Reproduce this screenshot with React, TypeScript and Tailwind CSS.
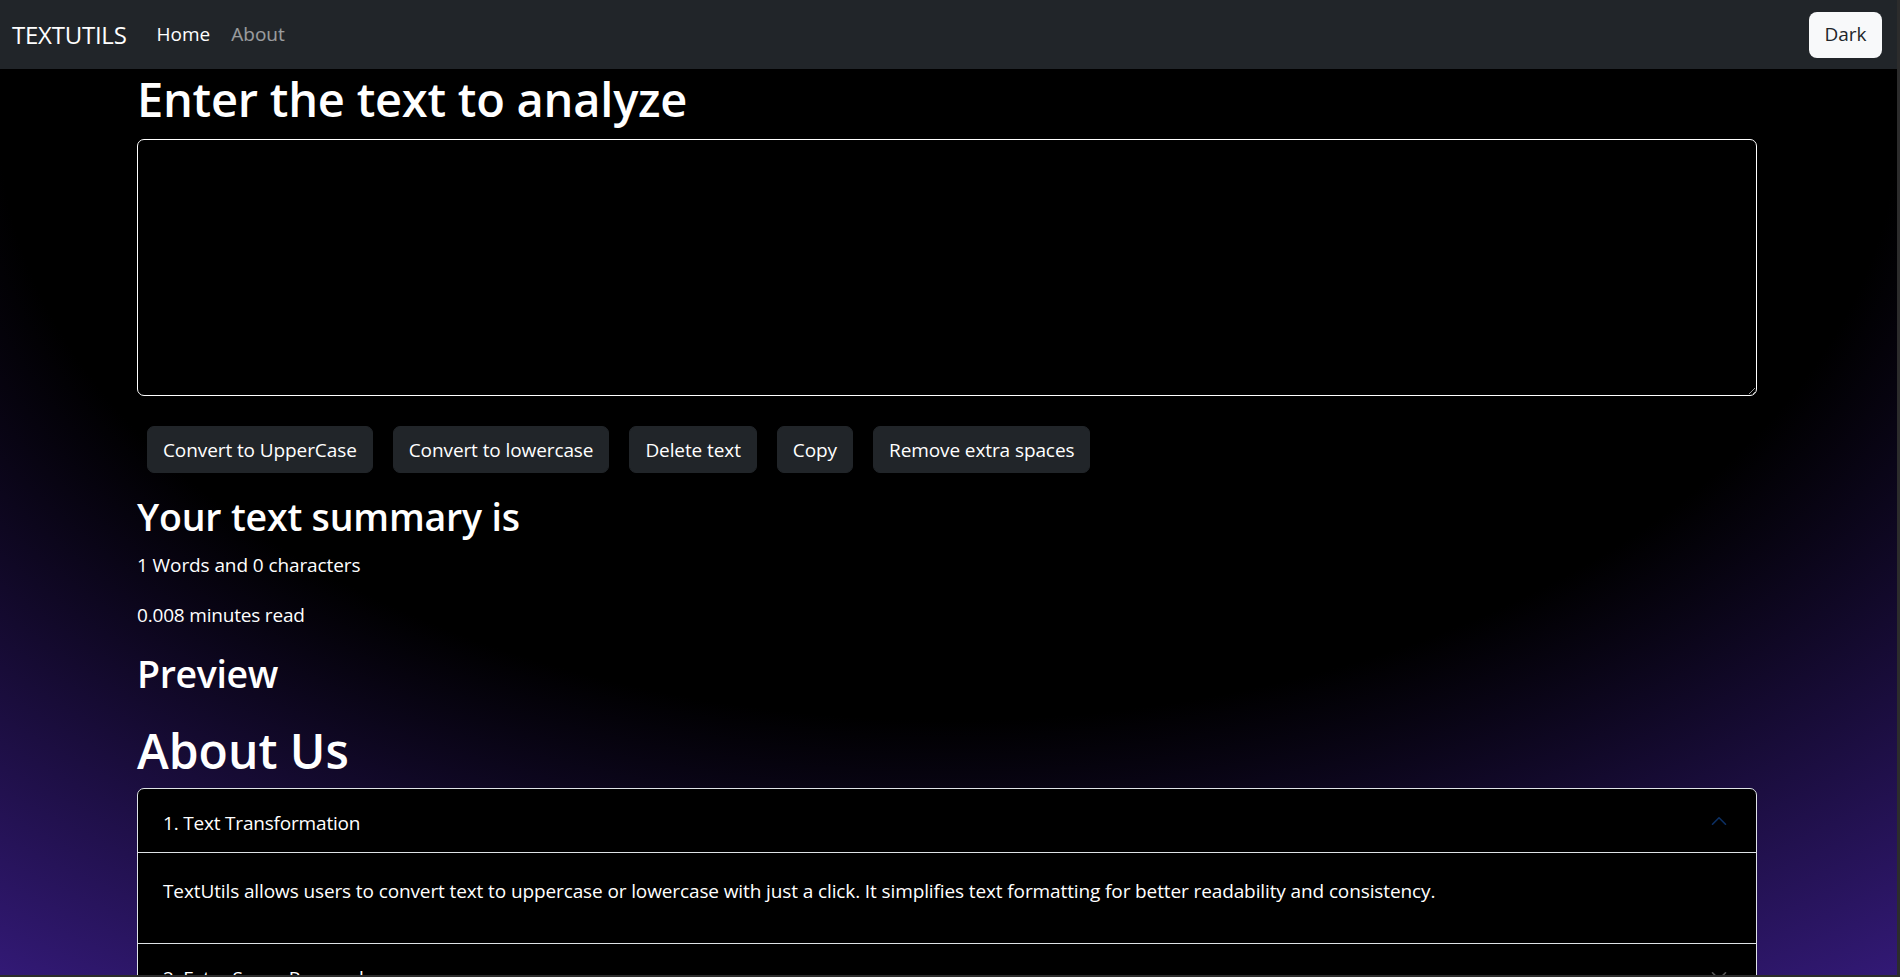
import { ChevronDown, ChevronUp } from 'lucide-react'

const buttons = ['Convert to UpperCase', 'Convert to lowercase', 'Delete text', 'Copy', 'Remove extra spaces']

export default function App() {
    return (
        <div className="h-[977px] w-full overflow-hidden border-r-[3px] border-b-[2px] border-[#2c2c2c] font-['Open_Sans',sans-serif] text-white">
            <div className="h-full w-full [background:radial-gradient(2371px_1500px_at_50%_120px,#000_40%,#63e_100%)]">
                <nav className="flex h-[69px] items-center bg-[#212529] pl-[12px] pr-[15px]">
                    <span className="text-[24px] leading-none tracking-[-0.01em]">TEXTUTILS</span>
                    <a className="ml-[30px] text-[19px]">Home</a>
                    <a className="ml-[21px] text-[19px] text-white/55">About</a>
                    <button className="ml-auto h-[46px] w-[73px] rounded-[8px] bg-[#f8f9fa] text-[19px] text-[#212529]">Dark</button>
                </nav>

                <div className="ml-[137px] w-[1620px]">
                    <h1 className="mb-[10px] text-[47px] font-semibold leading-[60px] tracking-[-0.005em]">Enter the text to analyze</h1>
                    <textarea className="block h-[257px] w-full rounded-[7px] border border-white bg-black p-3 text-[19px] text-white outline-none" />

                    <div className="mt-[30px] flex">
                        {buttons.map((b) => (
                            <button key={b} className="mx-[10px] rounded-[7px] border border-[#212529] bg-[#212529] px-[15px] py-[7.5px] text-[19px] leading-[30px] tracking-[-0.005em] text-white">
                                {b}
                            </button>
                        ))}
                    </div>

                    <h2 className="mt-[20px] mb-[9px] text-[37.5px] font-semibold leading-[48px] tracking-[-0.005em]">Your text summary is</h2>
                    <p className="mb-[20px] text-[19px] leading-[30px] tracking-[-0.005em]">1 Words and 0 characters</p>
                    <p className="mb-[20px] text-[19px] leading-[30px] tracking-[-0.01em]">0.008 minutes read</p>
                    <h2 className="mb-[23px] text-[37.5px] font-semibold leading-[48px] tracking-[-0.01em]">Preview</h2>
                    <h1 className="mb-[7px] text-[48px] font-semibold leading-[60px]">About Us</h1>

                    <div className="rounded-[7px] border border-[#dee2e6] bg-black">
                        <div className="flex h-[64px] items-center justify-between border-b border-[#dee2e6] pt-[5px] pl-[25px] pr-[24px]">
                            <span className="text-[19px] tracking-[-0.01em]">1. Text Transformation</span>
                            <ChevronUp className="-mt-[5px] text-[#0c2f63]" size={26} strokeWidth={1.5} />
                        </div>
                        <div className="h-[91px] border-b border-[#dee2e6] px-[25px] pt-[23px]">
                            <p className="text-[19px] leading-[30px] tracking-[-0.006em]">
                                TextUtils allows users to convert text to uppercase or lowercase with just a click. It simplifies text formatting for better readability and consistency.
                            </p>
                        </div>
                        <div className="flex h-[64px] items-center justify-between pt-[5px] pl-[25px] pr-[24px]">
                            <span className="text-[19px] tracking-[-0.01em]">2. Extra Space Removal</span>
                            <ChevronDown className="-mt-[5px] text-[#555]" size={26} strokeWidth={1.5} />
                        </div>
                    </div>
                </div>
            </div>
        </div>
    )
}
